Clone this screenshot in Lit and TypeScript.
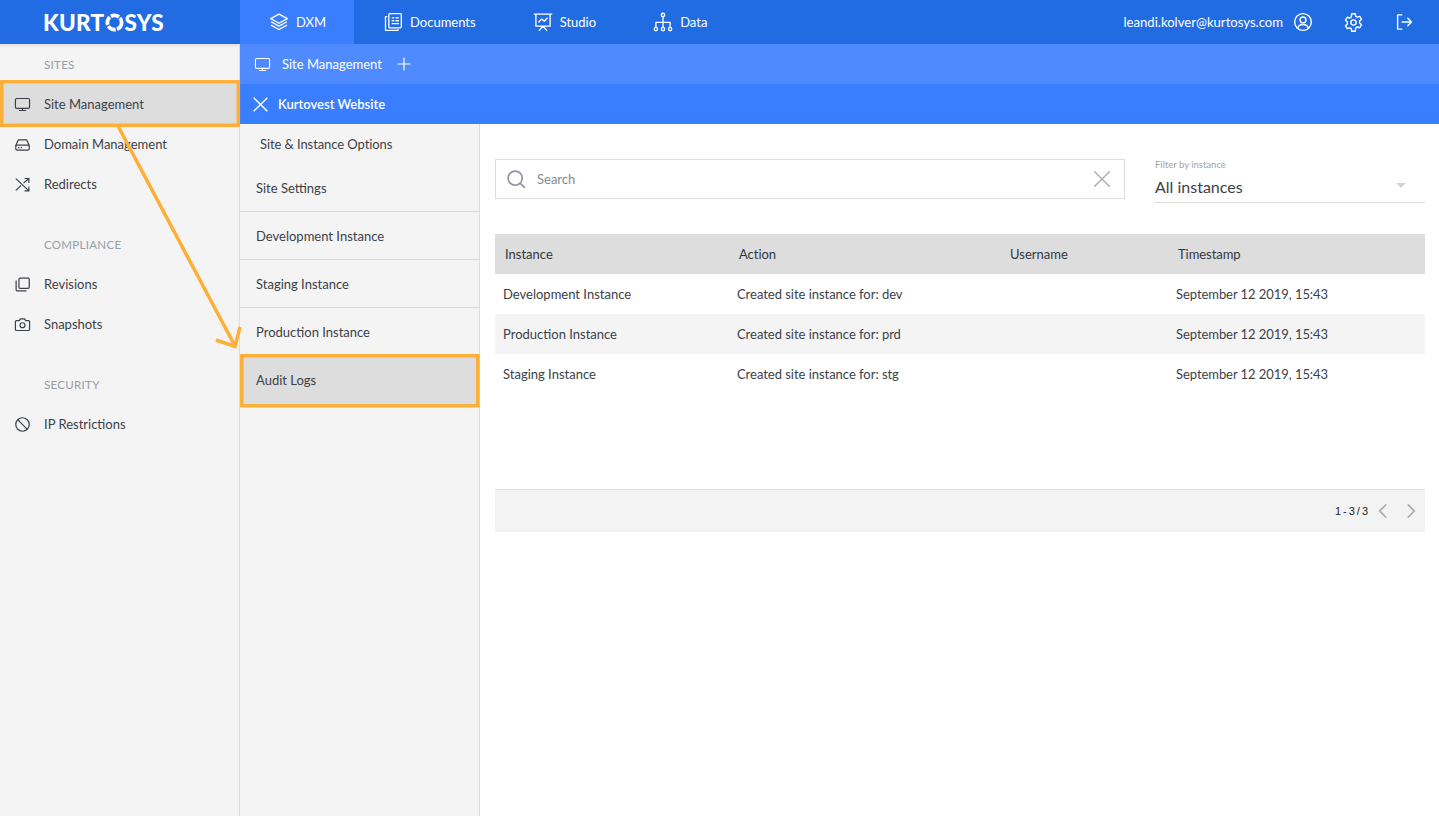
import { LitElement, html, css, svg } from "lit";
import { customElement } from "lit/decorators.js";

const ic = (body: unknown, size = 18, sw = 1.6) => html`<svg class="ic" width=${size} height=${size} viewBox="0 0 24 24" fill="none" stroke="currentColor" stroke-width=${sw} stroke-linecap="round" stroke-linejoin="round">${body}</svg>`;

const icons: Record<string, unknown> = {
  monitor: svg`<rect x="2" y="3.500" width="20" height="14" rx="2"/><path d="M12 17.500v3M7.500 20.500h9"/>`,
  drive: svg`<path d="M2.500 13.500 6 5.500h12l3.500 8"/><rect x="2.500" y="13" width="19" height="7" rx="2"/><path d="M6.500 16.500h.5M10 16.500h.5"/>`,
  shuffle: svg`<path d="M3 4l18 17M3 20l6.500-6.500M14 9.500 21 3.500M15.500 3.500H21V9M21 15.500V21h-5.500"/>`,
  copy: svg`<rect x="7" y="3" width="14.500" height="14.500" rx="1.500"/><path d="M3 7v12.500A1.500 1.500 0 0 0 4.500 21H17"/>`,
  camera: svg`<path d="M3.500 6.500h4L9 4h6l1.500 2.500h4a1.500 1.500 0 0 1 1.500 1.500v11a1.500 1.500 0 0 1-1.500 1.500h-17A1.500 1.500 0 0 1 2 19V8a1.500 1.500 0 0 1 1.500-1.500z"/><circle cx="12" cy="13" r="3.500"/>`,
  ban: svg`<circle cx="12" cy="12" r="9.500"/><path d="M5.500 5.500l13 13"/>`,
  layers: svg`<path d="M12 2.500 22 8l-10 5.500L2 8z"/><path d="M3 12l9 5 9-5M3 16l9 5 9-5"/>`,
  docs: svg`<rect x="7" y="2" width="15" height="17" rx="1"/><path d="M4.500 5.500H3v16.500h15v-1M11 7h2M15.500 7h3M11 10.500h2M15.500 10.500h3M11 14h7.500"/>`,
  studio: svg`<path d="M1.500 2.500h21M3.500 2.500V17h17V2.500M7.500 22l4.500-5 4.500 5M7 12l3.500-3.500 3 2.500L17 7.500"/>`,
  data: svg`<circle cx="12" cy="3.500" r="2"/><circle cx="3.500" cy="20.500" r="2"/><circle cx="12" cy="20.500" r="2"/><circle cx="20.500" cy="20.500" r="2"/><path d="M12 5.500v13M3.500 18.500V12.500h17v6"/>`,
  user: svg`<circle cx="12" cy="12" r="10"/><circle cx="12" cy="9.500" r="3.500"/><path d="M5.500 19.500c1-3.500 3.500-4.500 6.500-4.500s5.500 1 6.500 4.500"/>`,
  gear: svg`<circle cx="12" cy="12" r="3"/><path d="M10 2h4l.6 2.900 1.800 1 2.800-.9 2 3.400-2.200 2v2.200l2.200 2-2 3.400-2.800-.9-1.800 1L14 22h-4l-.6-2.900-1.800-1-2.800.9-2-3.400 2.200-2v-2.200l-2.200-2 2-3.400 2.800.9 1.800-1z"/>`,
  logout: svg`<path d="M9 2.500H3.500v19H9M9.500 12H22M17 7l5 5-5 5"/>`,
  plus: svg`<path d="M12 3v18M3 12h18"/>`,
  x: svg`<path d="M4 4l16 16M20 4 4 20"/>`,
  search: svg`<circle cx="11" cy="11" r="8.500"/><path d="M17.500 17.500 22 22"/>`,
  left: svg`<path d="M16 3l-9 9 9 9"/>`,
  right: svg`<path d="M8 3l9 9-9 9"/>`,
};

const tabs = [
  { icon: "layers", label: "DXM", active: true },
  { icon: "docs", label: "Documents" },
  { icon: "studio", label: "Studio" },
  { icon: "data", label: "Data" },
];

const sideGroups = [
  { title: "SITES", items: [
    { icon: "monitor", label: "Site Management", active: true },
    { icon: "drive", label: "Domain Management" },
    { icon: "shuffle", label: "Redirects" },
  ] },
  { title: "COMPLIANCE", items: [
    { icon: "copy", label: "Revisions" },
    { icon: "camera", label: "Snapshots" },
  ] },
  { title: "SECURITY", items: [{ icon: "ban", label: "IP Restrictions" }] },
];

const subItems = ["Site Settings", "Development Instance", "Staging Instance", "Production Instance"];

const rows = [
  ["Development Instance", "Created site instance for: dev", "", "September 12 2019, 15:43"],
  ["Production Instance", "Created site instance for: prd", "", "September 12 2019, 15:43"],
  ["Staging Instance", "Created site instance for: stg", "", "September 12 2019, 15:43"],
];

@customElement("app-root")
export class AppRoot extends LitElement {
  static styles = css`
    :host {
      display: block;
      position: relative;
      height: 100vh;
      overflow: hidden;
      background: #fff;
      color: #3c4148;
      font-family: Lato, "Liberation Sans", sans-serif;
      font-size: 13px;
    }
    .ic { flex: none; display: block; }
    .top {
      display: flex;
      align-items: stretch;
      height: 44px;
      background: #226ce3;
      color: #fff;
    }
    .logo {
      width: 197px;
      padding-left: 43px;
      display: flex;
      align-items: center;
      font-size: 22.500px;
      font-weight: 900;
      letter-spacing: 0.300px;
    }
    .logo svg { margin: 0 0.500px; }
    .tab {
      display: flex;
      align-items: center;
      gap: 7px;
      padding: 0 28px 0 29px;
    }
    .tab.active { background: #397eff; }
    .account {
      margin-left: auto;
      display: flex;
      align-items: center;
      padding-right: 26px;
      font-size: 13.100px;
    }
    .account .u { margin: 0 30px 0 10px; }
    .account .g { margin-right: 31px; }
    .body { display: flex; height: calc(100vh - 44px); }
    .side {
      width: 240px;
      flex: none;
      box-sizing: border-box;
      background: #f4f4f4;
      border-right: 1px solid #dcdcdc;
      box-shadow: inset 0 4px 4px -3px rgba(0, 0, 0, 0.12);
    }
    .group { margin-bottom: 20px; }
    .group h4 {
      margin: 0;
      height: 40px;
      display: flex;
      align-items: center;
      padding-left: 44px;
      font-size: 11.500px;
      font-weight: 400;
      letter-spacing: 0.300px;
      color: #9a9ca6;
    }
    .item {
      display: flex;
      align-items: center;
      height: 40px;
      padding-left: 14px;
      gap: 13px;
    }
    .item.active { background: #dddddd; }
    .right { flex: 1; display: flex; flex-direction: column; min-width: 0; }
    .bar {
      height: 40px;
      flex: none;
      display: flex;
      align-items: center;
      color: #fff;
    }
    .bar.a { background: #4f8bff; padding-left: 14px; gap: 11px; }
    .bar.a .plus { margin-left: 3px; }
    .bar.b { background: #397eff; padding-left: 11px; gap: 8px; font-weight: 600; }
    .content { flex: 1; display: flex; min-height: 0; }
    .sub {
      width: 240px;
      flex: none;
      box-sizing: border-box;
      background: #f4f4f4;
      border-right: 1px solid #dcdcdc;
    }
    .sub .head { height: 40px; display: flex; align-items: center; padding-left: 20px; letter-spacing: -0.080px; }
    .sub .row {
      height: 48px;
      box-sizing: border-box;
      display: flex;
      align-items: center;
      padding-left: 16px;
      border-bottom: 1px solid #dcdcdc;
    }
    .sub .row.plain { border-bottom: 0; }
    .sub .row.active { background: #dddddd; }
    .main { flex: 1; padding: 35px 14px 0 15px; min-width: 0; }
    .filters { display: flex; align-items: flex-start; gap: 30px; height: 75px; }
    .search {
      flex: 1;
      height: 40px;
      box-sizing: border-box;
      border: 1px solid #dedede;
      display: flex;
      align-items: center;
      padding: 0 11px 0 10px;
      gap: 11px;
      color: #858a94;
    }
    .search > .ic { color: #8f93a0; }
    .search .clear { margin-left: auto; color: #a9abb0; }
    .select {
      width: 270px;
      height: 44px;
      box-sizing: border-box;
      border-bottom: 1px solid #dcdcdc;
      position: relative;
    }
    .select small {
      display: block;
      font-size: 9.500px;
      line-height: 12px;
      color: #a3a5a9;
      margin-bottom: 5px;
    }
    .select span { display: block; font-size: 16px; line-height: 21px; }
    .select i {
      position: absolute;
      right: 19px;
      top: 24px;
      border: 5px solid transparent;
      border-top: 5px solid #d4d4d4;
      border-bottom: 0;
    }
    .grid { display: grid; grid-template-columns: 234px 271px 168px 1fr; align-items: center; height: 40px; }
    .grid > div { padding-left: 8px; }
    .grid > div:nth-child(4) { letter-spacing: -0.060px; }
    .grid > div:nth-child(2) { letter-spacing: -0.030px; }
    .grid.th { background: #dddddd; color: #33373d; }
    .grid.th > div { padding-left: 10px; }
    .grid.alt { background: #f4f4f4; }
    .pager {
      margin-top: 95px;
      height: 43px;
      box-sizing: border-box;
      background: #f3f3f3;
      border-top: 1px solid #dedede;
      display: flex;
      align-items: center;
      justify-content: flex-end;
      padding-right: 6px;
      color: #222;
    }
    .pager b {
      font: 400 11px "Liberation Sans", sans-serif;
      letter-spacing: 2px;
      margin-right: 5px;
    }
    .pager .ic { color: #a8a8a8; }
    .pager .ic + .ic { margin-left: 12px; }
    .marks { position: absolute; left: 0; top: 0; pointer-events: none; }
  `;

  render() {
    return html`
      <div class="top">
        <div class="logo">KURT<svg width="19" height="19" viewBox="0 0 20 20" fill="none" stroke="currentColor" stroke-width="4" stroke-dasharray="9 1.400"><circle cx="10" cy="10" r="7.500"/></svg>SYS</div>
        ${tabs.map(t => html`
          <div class="tab ${t.active ? "active" : ""}">${ic(icons[t.icon], 20, 1.6)}<span>${t.label}</span></div>`)}
        <div class="account">
          <span>leandi.kolver@kurtosys.com</span>
          <span class="u">${ic(icons.user, 20, 1.7)}</span>
          <span class="g">${ic(icons.gear, 21, 1.6)}</span>
          ${ic(icons.logout, 18, 1.8)}
        </div>
      </div>
      <div class="body">
        <aside class="side">
          ${sideGroups.map(g => html`
            <div class="group">
              <h4>${g.title}</h4>
              ${g.items.map((i: any) => html`
                <div class="item ${i.active ? "active" : ""}">${ic(icons[i.icon], 17, 1.7)}<span>${i.label}</span></div>`)}
            </div>`)}
        </aside>
        <div class="right">
          <div class="bar a">${ic(icons.monitor, 17, 1.5)}<span>Site Management</span><span class="plus">${ic(icons.plus, 16, 1.8)}</span></div>
          <div class="bar b">${ic(icons.x, 19, 1.9)}<span>Kurtovest Website</span></div>
          <div class="content">
            <nav class="sub">
              <div class="head">Site &amp; Instance Options</div>
              ${subItems.map((s, n) => html`<div class="row ${n === subItems.length - 1 ? "plain" : ""}">${s}</div>`)}
              <div class="row plain active">Audit Logs</div>
            </nav>
            <main class="main">
              <div class="filters">
                <div class="search">
                  ${ic(icons.search, 20, 2)}<span>Search</span>
                  <span class="clear">${ic(icons.x, 22, 1.500)}</span>
                </div>
                <div class="select">
                  <small>Filter by instance</small>
                  <span>All instances</span>
                  <i></i>
                </div>
              </div>
              <div class="grid th"><div>Instance</div><div>Action</div><div>Username</div><div>Timestamp</div></div>
              ${rows.map((r, n) => html`
                <div class="grid ${n % 2 ? "alt" : ""}">${r.map(c => html`<div>${c}</div>`)}</div>`)}
              <div class="pager">
                <b>1-3/3</b>
                ${ic(icons.left, 16, 2.600)}${ic(icons.right, 16, 2.600)}
              </div>
            </main>
          </div>
        </div>
      </div>
      <svg class="marks" width="1439" height="816" fill="none" stroke="#ffae36" stroke-width="3.500">
        <rect x="1.800" y="81.800" width="236.500" height="43.500"/>
        <rect x="241.800" y="355.800" width="236" height="50"/>
        <path d="M118 126 235 346M216 340l19 6.500 5-19.500"/>
      </svg>
    `;
  }
}
